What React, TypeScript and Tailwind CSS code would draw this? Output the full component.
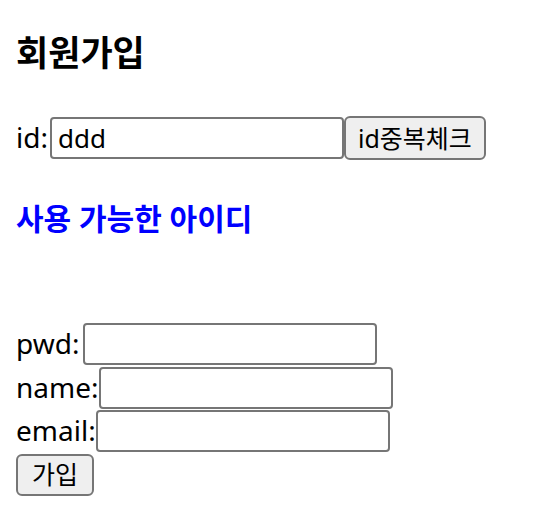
const font = "font-['Noto_Sans','Noto_Sans_CJK_KR',sans-serif]";

const Field = ({ label, gap = "" }: { label: string; gap?: string }) => (
  <div className="flex items-baseline">
    <span className={`text-[28px] leading-none ${gap}`}>{label}</span>
    <input className="h-[42px] w-[294px] rounded-[4px] border-2 border-[#767676] bg-white px-[6px] text-[26px] text-black outline-none" />
  </div>
);

export default function App() {
  return (
    <div className={`${font} flex min-h-[532px] flex-col bg-white px-4 pt-[33px] text-black`}>
      <h1 className="text-[35px] leading-[40px] font-bold">회원가입</h1>

      <div className="mt-[43px] flex items-baseline">
        <span className="pr-[2px] text-[28px] leading-none">id:</span>
        <input
          defaultValue="ddd"
          className="h-[42px] w-[294px] rounded-[4px] border-2 border-[#767676] bg-white px-[6px] text-[26px] text-black outline-none"
        />
        <button className="h-[44px] rounded-[6px] border-2 border-[#767676] bg-[#efefef] px-[12px] text-[25px] leading-none text-black">
          id중복체크
        </button>
      </div>

      <h2 className="mt-[39px] text-[30px] leading-[40px] font-bold text-[#0000ff]">사용 가능한 아이디</h2>

      <div className="mt-[84px] flex flex-col gap-[1.5px]">
        <Field label="pwd:" gap="pr-[4px]" />
        <Field label="name:" />
        <Field label="email:" />
        <div>
          <button className="h-[42px] rounded-[6px] border-2 border-[#767676] bg-[#efefef] px-[14px] text-[25px] leading-none text-black">
            가입
          </button>
        </div>
      </div>
    </div>
  );
}
